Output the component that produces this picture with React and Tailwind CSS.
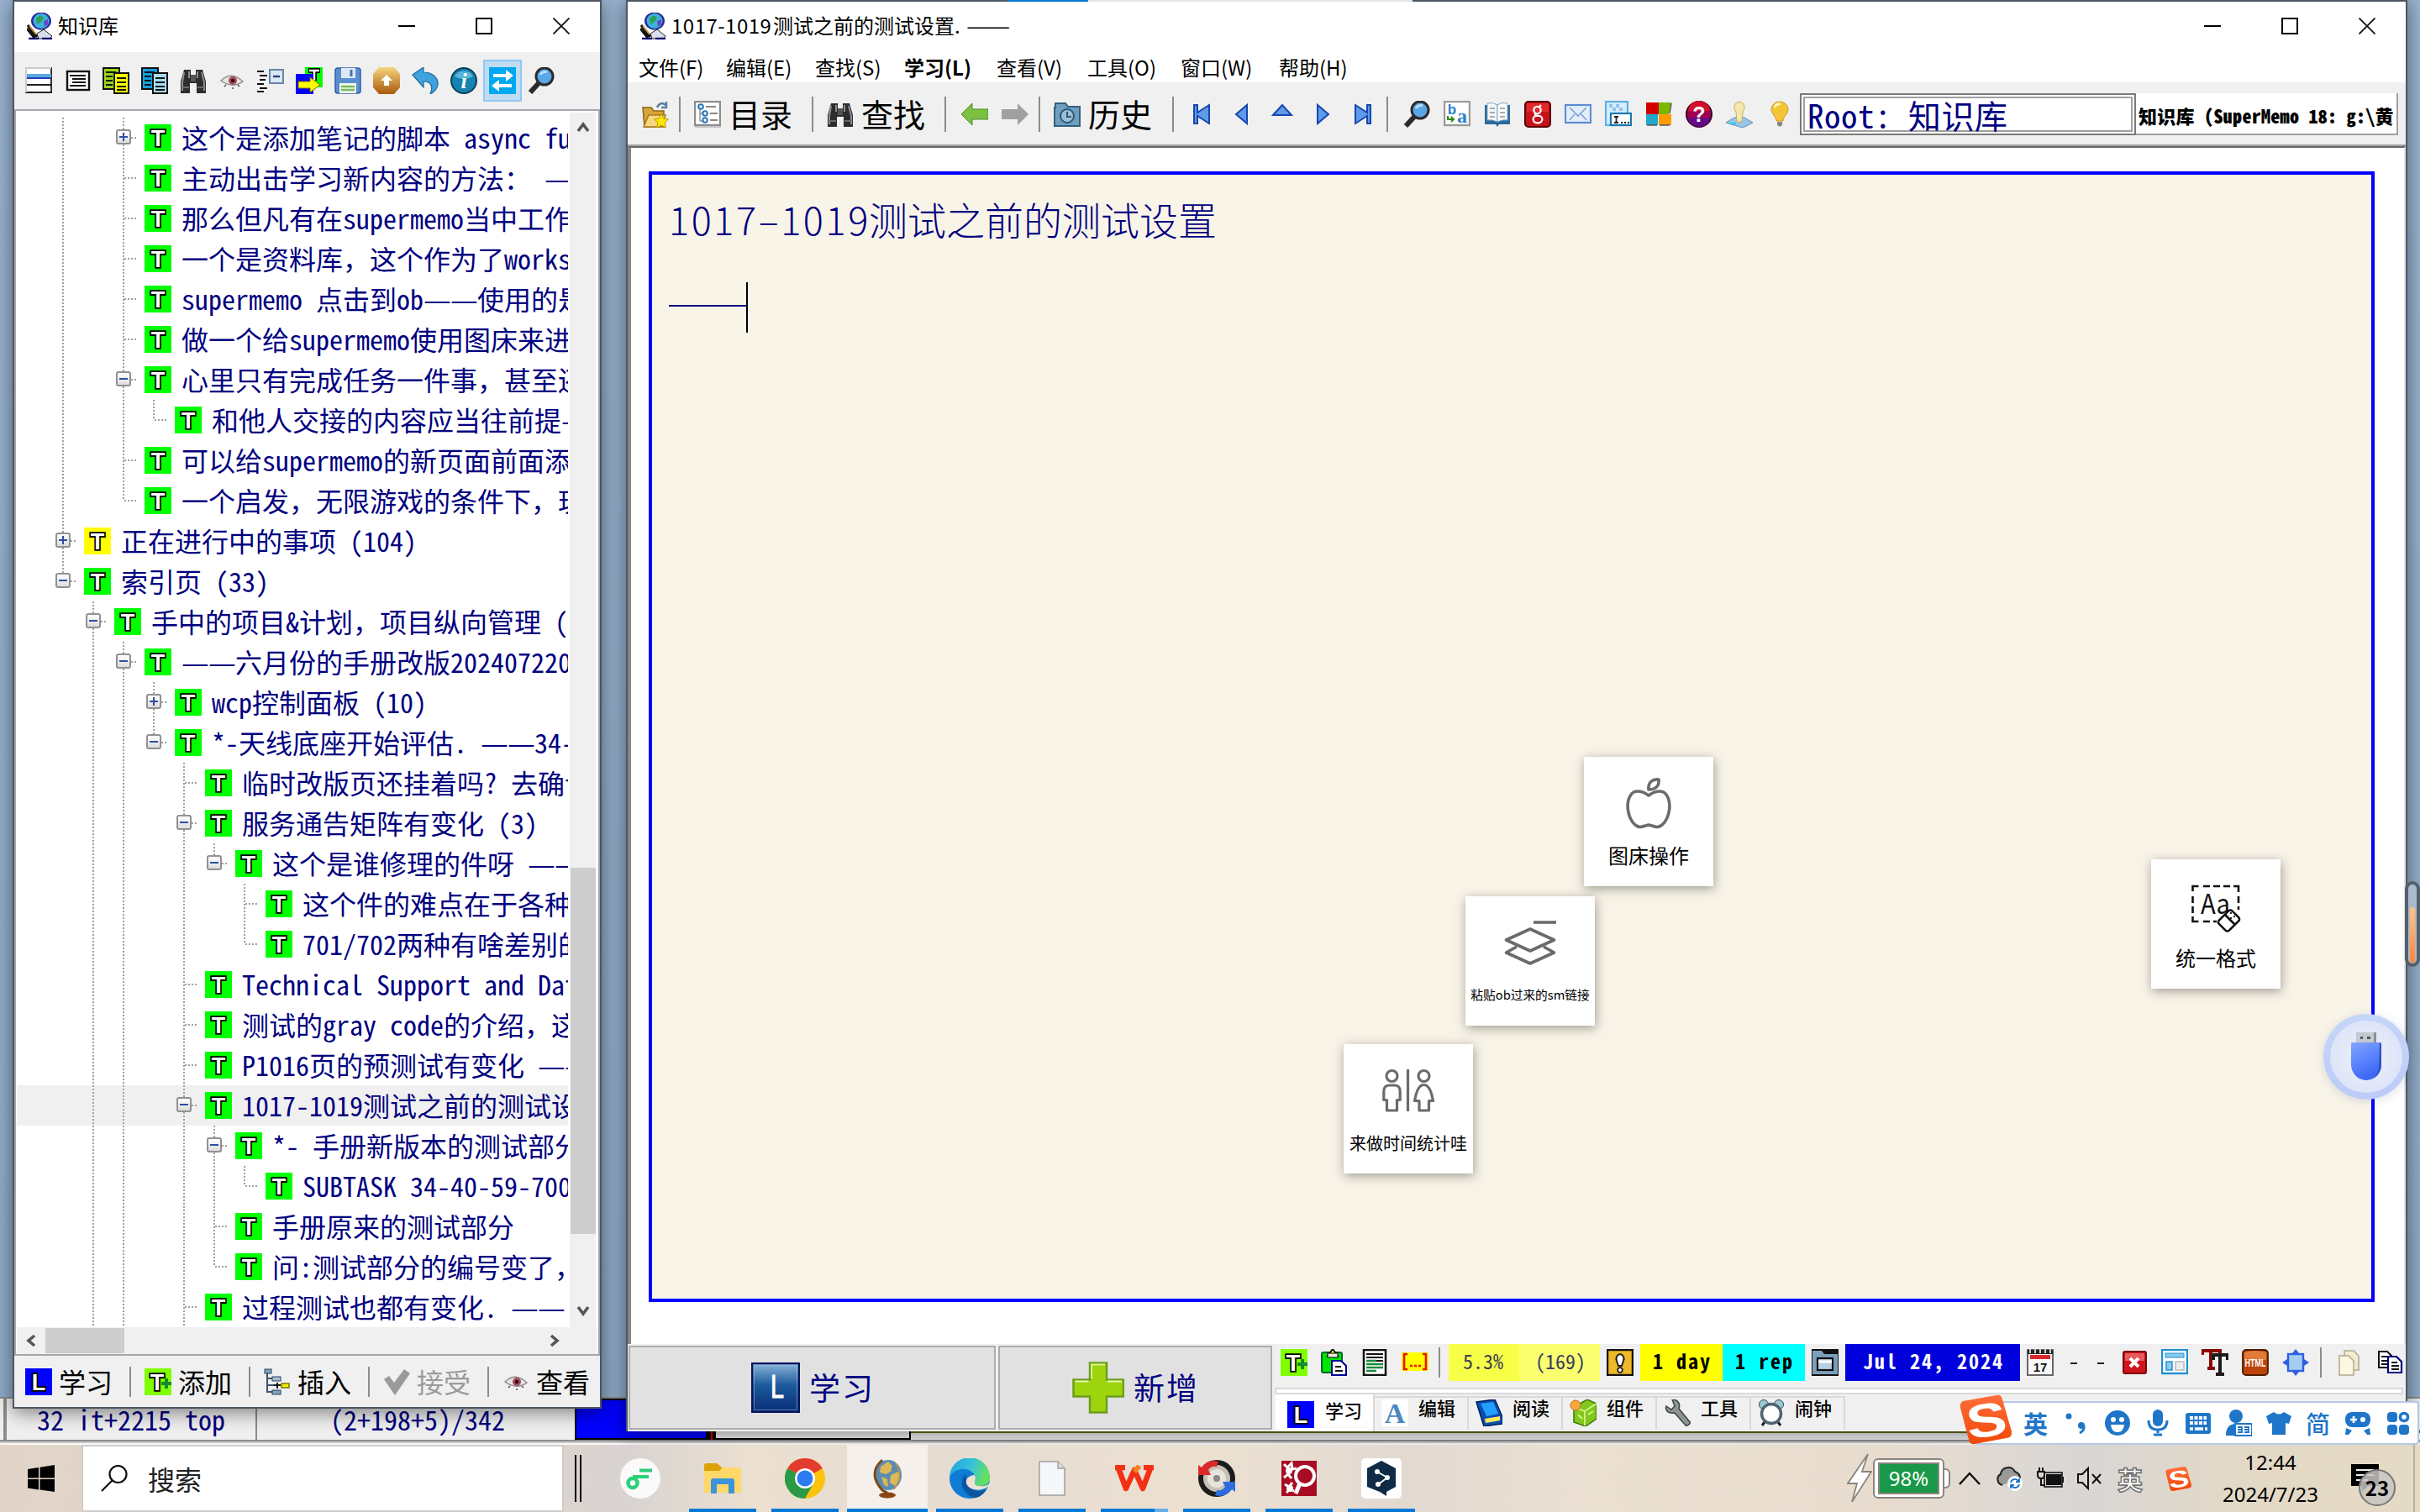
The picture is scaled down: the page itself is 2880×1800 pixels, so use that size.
import React from "react";

/* ---------- small building blocks ---------- */

const I = ({ children, className = "" }) => (
  <svg viewBox="0 0 32 32" className={"block w-8 h-8 shrink-0 " + className} fill="none">
    {children}
  </svg>
);

const Sep = ({ className = "" }) => <div className={"w-0.5 shrink-0 bg-[#8c8c8c] " + className} />;

const Glyph = ({ ch, x = 16, fill = "#fff" }) => (
  <text
    x={x}
    y="26"
    textAnchor="middle"
    fontFamily="Liberation Sans"
    fontWeight="700"
    fontSize="27"
    fill={fill}
    stroke="#000"
    strokeWidth="3.6"
    paintOrder="stroke"
  >
    {ch}
  </text>
);

/* Latin characters take half a cell, everything else (dashes included) a full one */
const Grid = ({ t }) =>
  t.split(/([\x20-\x7e]+|—)/).map((s, i) =>
    s === "—" ? (
      <span key={i} className="inline-block w-8 origin-left scale-x-[1.15]">
        {s}
      </span>
    ) : i % 2 ? (
      <span key={i} className="[font-feature-settings:'hwid'_1]">
        {s}
      </span>
    ) : (
      s
    )
  );

const TopicIcon = ({ color = "#00ff00" }) => (
  <I>
    <rect width="32" height="32" fill={color} />
    <Glyph ch="T" />
  </I>
);
const LearnIcon = () => (
  <I>
    <rect width="32" height="32" fill="#0000ff" />
    <Glyph ch="L" />
  </I>
);
const AddTopicIcon = () => (
  <I>
    <rect width="32" height="32" fill="#80ff00" />
    <Glyph ch="T" x={15} />
    <path d="M26 12v12M20 18h12" stroke="#158a2a" strokeWidth="4" />
  </I>
);
const Globe = () => (
  <I>
    <ellipse cx="17" cy="10" rx="12" ry="10.5" fill="#2a2a9c" />
    <ellipse cx="17" cy="10" rx="9.5" ry="9" fill="#3bb4d8" />
    <path d="M11 7l5-4 4 3-3 5-5 3z" fill="#2f9e58" />
    <path d="M20 10l5-2v6l-4 3z" fill="#6a46c8" />
    <path d="M1 15l11 14M0 19l9 11" stroke="#111" strokeWidth="3" />
    <path d="M3 16l8 10" stroke="#b8902a" strokeWidth="2" />
    <path d="M12 25l8-5 10 8-3 3H14z" fill="#d9deea" stroke="#222" strokeWidth="1" />
    <path d="M2 31h12M18 31h12" stroke="#000070" strokeWidth="2.5" />
  </I>
);
const Magnifier = () => (
  <I>
    <path d="M3 30l11-12" stroke="#2b2b2b" strokeWidth="6" />
    <circle cx="20" cy="11" r="10" fill="#5aa7e6" stroke="#2b2b2b" strokeWidth="3" />
    <path d="M15 9a6 6 0 0 1 8-3" stroke="#b9dcf8" strokeWidth="3" />
  </I>
);
const Binoculars = () => (
  <I>
    <path d="M5 3h8v6h6V3h8l4 14v14H20V19h-8v12H1V17z" fill="#2d2d2d" />
    <path d="M5 6l-2 12v10M26 6l3 12v10M11 5v8M21 5v8" stroke="#8d8d8d" strokeWidth="2" />
    <path d="M3 24h8M21 24h8" stroke="#6a6a6a" strokeWidth="2" />
    <rect x="13" y="9" width="6" height="8" fill="#555" />
  </I>
);
const Eye = ({ className = "" }) => (
  <I className={className}>
    <path d="M3 16q12-12 26 1q-12 9-26-1z" fill="#e9e4e4" stroke="#8b8b8b" strokeWidth="1.5" />
    <circle cx="17" cy="16" r="5" fill="#a84a5c" />
    <circle cx="17" cy="16" r="2.3" fill="#2a0a12" />
    <path d="M7 23l2-2M17 26v-2M25 23l-2-2" stroke="#555" strokeWidth="1.6" />
  </I>
);
const Pages = ({ a, b }) => (
  <I>
    <rect x="1" y="1" width="19" height="25" fill={a} stroke="#111" strokeWidth="2" />
    <path d="M4 6h12M4 11h8M4 16h8M4 21h8" stroke="#111" strokeWidth="2" />
    <rect x="14" y="7" width="17" height="24" fill={b} stroke="#111" strokeWidth="2" />
    <path d="M17 13h11M17 18h11M17 23h11M17 27h11" stroke="#111" strokeWidth="1.8" />
  </I>
);
const TreeIcon = () => (
  <I>
    <path d="M4 4v24h10M4 12h8M4 20h8" stroke="#38536b" strokeWidth="2" />
    <rect x="1" y="1" width="8" height="5" fill="#7fa0bd" stroke="#2c4257" />
    <rect x="10" y="10" width="10" height="5" fill="#a8c0d4" stroke="#2c4257" />
    <path d="M12 20h8M16 17v7" stroke="#111" strokeWidth="2" />
    <rect x="21" y="18" width="9" height="5" fill="#f0f000" stroke="#77770a" strokeWidth="1.5" />
    <rect x="10" y="26" width="10" height="5" fill="#7fa0bd" stroke="#2c4257" />
  </I>
);

/* ---------- collection tree ---------- */

const DOTS_V = "bg-[repeating-linear-gradient(to_bottom,#a0a0a0_0px,#a0a0a0_2px,transparent_2px,transparent_4px)]";
const DOTS_H = "bg-[repeating-linear-gradient(to_right,#a0a0a0_0px,#a0a0a0_2px,transparent_2px,transparent_4px)]";

/* g: one character per level above the node, "|" where a guide line passes; end: last child of its parent */
const ROWS = [
  { g: "| ", box: "+", t: "这个是添加笔记的脚本 async fu" },
  { g: "| ", t: "主动出击学习新内容的方法： —" },
  { g: "| ", t: "那么但凡有在supermemo当中工作" },
  { g: "| ", t: "一个是资料库，这个作为了works" },
  { g: "| ", t: "supermemo 点击到ob——使用的是" },
  { g: "| ", t: "做一个给supermemo使用图床来进" },
  { g: "| ", box: "-", t: "心里只有完成任务一件事，甚至还" },
  { g: "| |", end: true, t: "和他人交接的内容应当往前提—" },
  { g: "| ", t: "可以给supermemo的新页面前面添" },
  { g: "| ", end: true, t: "一个启发，无限游戏的条件下，玩" },
  { g: "", box: "+", color: "#ffff00", t: "正在进行中的事项 (104)" },
  { g: "", box: "-", end: true, t: "索引页 (33)" },
  { g: " ", box: "-", t: "手中的项目&计划，项目纵向管理 (" },
  { g: " |", box: "-", t: "——六月份的手册改版202407220" },
  { g: " ||", box: "+", t: "wcp控制面板 (10)" },
  { g: " ||", box: "-", end: true, t: "*-天线底座开始评估. ——34-" },
  { g: " || ", t: "临时改版页还挂着吗? 去确认" },
  { g: " || ", box: "-", t: "服务通告矩阵有变化 (3)" },
  { g: " || |", box: "-", end: true, t: "这个是谁修理的件呀 ——" },
  { g: " || | ", t: "这个件的难点在于各种" },
  { g: " || | ", end: true, t: "701/702两种有啥差别的" },
  { g: " || ", t: "Technical Support and Dat" },
  { g: " || ", t: "测试的gray code的介绍，这" },
  { g: " || ", t: "P1016页的预测试有变化 ——" },
  { g: " || ", box: "-", sel: true, t: "1017-1019测试之前的测试设" },
  { g: " || |", box: "-", t: "*- 手册新版本的测试部分" },
  { g: " || ||", end: true, t: "SUBTASK 34-40-59-700" },
  { g: " || |", t: "手册原来的测试部分" },
  { g: " || |", end: true, t: "问:测试部分的编号变了，" },
  { g: " || ", t: "过程测试也都有变化. ——" },
];

const Row = ({ g, box, end, sel, color, t }) => (
  <div className={"flex h-12 shrink-0 pl-[37px] " + (sel ? "bg-[#f0f0f0]" : "")}>
    {g.split("").map((c, i) => (
      <div key={i} className="flex w-9 shrink-0 justify-center">
        {c === "|" && <div className={"w-0.5 " + DOTS_V} />}
      </div>
    ))}
    <div className="relative w-9 shrink-0">
      <div className={"absolute left-[17px] top-0 w-0.5 " + DOTS_V + (end ? " h-6" : " h-12")} />
      <div className={"absolute left-[19px] top-[23px] h-0.5 w-4 " + DOTS_H} />
      {box && (
        <div className="absolute left-[9px] top-[14px] flex h-[18px] w-[18px] items-center justify-center rounded-[3px] border-2 border-[#919191] bg-gradient-to-b from-white to-[#dcdcdc]">
          <div className="h-0.5 w-2.5 bg-[#2b4ea0]" />
          {box === "+" && <div className="absolute h-2.5 w-0.5 bg-[#2b4ea0]" />}
        </div>
      )}
    </div>
    <div className="ml-[7px] mt-2">
      <TopicIcon color={color} />
    </div>
    <div className="ml-[12px] whitespace-pre text-[32px] leading-[46px] text-[#000080]">
      <Grid t={t} />
    </div>
  </div>
);

const WinButtons = ({ className = "" }) => (
  <div className={"flex items-center " + className}>
    <div className="flex w-[92px] justify-center">
      <div className="h-0.5 w-5 bg-black" />
    </div>
    <div className="flex w-[92px] justify-center">
      <div className="h-5 w-5 border-2 border-black" />
    </div>
    <div className="flex w-[92px] justify-center">
      <svg viewBox="0 0 20 20" className="h-5 w-5">
        <path d="M0.5 0.5l19 19M19.5 0.5l-19 19" stroke="#111" strokeWidth="1.8" />
      </svg>
    </div>
  </div>
);

const Chevron = ({ d, className = "" }) => (
  <svg viewBox="0 0 16 16" className={"h-4 w-4 shrink-0 " + className}>
    <path d={d} fill="none" stroke="#555" strokeWidth="3.6" />
  </svg>
);

const LeftTools = () => (
  <div className="flex h-[68px] items-center bg-[#f0f0f0] pl-[6px]">
    {[
      <I key="a">
        <rect x="0" y="0" width="32" height="31" fill="#fdfdfd" />
        <path d="M0 21h32M0 30h32M31 0v31" stroke="#222" strokeWidth="1.8" />
        <rect x="0" y="8" width="31" height="6" fill="#5aa9e0" />
        <path d="M0 13h31" stroke="#2040c0" strokeWidth="2" />
        <path d="M0 1h31M1 0v30" stroke="#ccc" strokeWidth="2" />
      </I>,
      <I key="b">
        <rect x="4" y="5" width="26" height="22" fill="#fff" stroke="#111" strokeWidth="2.4" />
        <path d="M7 10h19M10 14h16M10 18h16M7 22h19" stroke="#111" strokeWidth="2" />
      </I>,
      <Pages key="c" a="#9ad61a" b="#ffff00" />,
      <Pages key="d" a="#10a0e0" b="#a8dcf0" />,
      <Binoculars key="e" />,
      <Eye key="f" />,
      <I key="g">
        <path d="M0 5h8M3 10h9M3 15h7M0 20h8M3 25h9M0 29h8" stroke="#111" strokeWidth="2" />
        <rect x="15" y="3" width="16" height="16" fill="#dbe7f5" stroke="#6a86a8" strokeWidth="2" />
        <path d="M19 11h8" stroke="#23406a" strokeWidth="2.4" />
      </I>,
      <I key="h">
        <rect x="11" y="0" width="21" height="24" fill="#00ff00" />
        <path d="M15 4h14M22 4v12" stroke="#000" strokeWidth="6" />
        <path d="M16 4h12M22 4v12" stroke="#fff" strokeWidth="2.5" />
        <rect x="0" y="8" width="21" height="24" fill="#0000ff" />
        <path d="M3 17h14v-5l12 9-12 9v-5H3z" fill="#ffff00" stroke="#806000" />
      </I>,
      <I key="i">
        <rect x="1" y="1" width="30" height="30" rx="3" fill="#5b8ed0" stroke="#2f5da8" strokeWidth="1.5" />
        <rect x="8" y="1" width="17" height="12" fill="#dce8f6" />
        <path d="M20 3v8" stroke="#4a70a8" strokeWidth="3" />
        <rect x="6" y="19" width="20" height="12" fill="#f0f8ea" />
        <path d="M8 23h16M8 27h16" stroke="#7cb860" strokeWidth="2.4" />
      </I>,
      <I key="j">
        <defs>
          <linearGradient id="amber" x1="0" y1="0" x2="0" y2="1">
            <stop offset="0" stopColor="#f6d67c" />
            <stop offset="1" stopColor="#a8590c" />
          </linearGradient>
        </defs>
        <path d="M7 0h18l7 8v16l-7 8H7l-7-8V8z" fill="url(#amber)" />
        <path d="M16 9l7 7h-4v6h-6v-6H9z" fill="#fff" />
      </I>,
      <I key="k">
        <path d="M1 9L14 0v6c12 0 18 8 17 15-1 6-5 9-9 11 4-9 1-15-8-15v7z" fill="#3fa2dc" stroke="#1a6a9e" strokeWidth="1.2" />
      </I>,
      <I key="l">
        <ellipse cx="16" cy="16" rx="15" ry="15" fill="#1583b0" stroke="#0a3f58" strokeWidth="2" />
        <path d="M5 11a12 11 0 0 1 22 0q-11 6-22 0z" fill="#59b6d8" />
        <text x="16" y="25" textAnchor="middle" fontFamily="Liberation Serif" fontStyle="italic" fontWeight="700" fontSize="26" fill="#fff">i</text>
      </I>,
      <I key="m">
        <rect width="32" height="32" fill="#00a8f0" />
        <path d="M5 10h17M10 22h17" stroke="#fff" strokeWidth="4" />
        <path d="M20 3l9 7-9 7zM12 15l-9 7 9 7z" fill="#fff" />
      </I>,
      <Magnifier key="n" />,
    ].map((ic, i) => (
      <div
        key={i}
        className={
          "flex h-[50px] w-[46px] shrink-0 items-center justify-center " +
          (i === 12 ? "border-2 border-[#8fc8f6] bg-[#c0dcf3]" : "")
        }
      >
        {ic}
      </div>
    ))}
  </div>
);

const LeftWindow = () => (
  <div className="absolute left-[15px] top-0 flex h-[1677px] w-[701px] flex-col border-2 border-[#4c5763] bg-[#f0f0f0] shadow-[0_4px_22px_rgba(0,0,0,0.5)]">
    <div className="flex h-[60px] shrink-0 items-center bg-white pb-0.5 pl-[15px]">
      <Globe />
      <div className="ml-[5px] pb-0.5 text-2xl leading-none text-black">知识库</div>
      <WinButtons className="ml-auto" />
    </div>
    <LeftTools />
    <div className="flex h-[1484px] shrink-0 flex-col border-2 border-[#a8a5ae] bg-white">
      <div className="flex h-[1448px] shrink-0">
        <div className="ml-px flex h-[1448px] w-[656px] shrink-0 flex-col overflow-hidden pt-[8px]">
          {ROWS.map((r, i) => (
            <Row key={i} {...r} />
          ))}
        </div>
        <div className="ml-0.5 mt-0.5 flex w-[31px] flex-col items-center bg-[#f0f0f0] pt-[9px]">
          <Chevron d="M2 13L8 5l6 8" />
          <div className="mt-[874px] h-[436px] w-[30px] shrink-0 bg-[#cdcdcd]" />
          <Chevron d="M2 3l6 8 6-8" className="mt-[84px]" />
        </div>
      </div>
      <div className="ml-px mr-0.5 flex h-8 items-center bg-[#f0f0f0] pl-2">
        <Chevron d="M13 2L6 8l7 6" />
        <div className="ml-[10px] h-[30px] w-[94px] bg-[#cdcdcd]" />
        <Chevron d="M3 2l7 6-7 6" className="ml-auto mr-[41px]" />
      </div>
    </div>
    <div className="-ml-[3px] flex flex-1 items-center text-[32px] leading-none text-black">
      {[
        [<LearnIcon />, "学习"],
        [<AddTopicIcon />, "添加"],
        [<TreeIcon />, "插入"],
        [
          <I>
            <path d="M1 13l6-4 6 8L25 1l7 5-18 26z" fill="#9a9a9a" />
          </I>,
          "接受",
        ],
        [<Eye />, "查看"],
      ].map(([ic, t], i) => (
        <div key={i} className="flex w-[142px] shrink-0 items-center pl-4">
          {ic}
          <div className={"ml-[8px] pb-0.5 " + (i === 3 ? "text-[#9a9a9a]" : "")}>{t}</div>
          {i < 4 && <Sep className="ml-auto h-9" />}
        </div>
      ))}
    </div>
  </div>
);

/* ---------- main window ---------- */

const BlueTri = ({ d }) => (
  <I>
    <path d={d} fill="#5f9be8" stroke="#1646b0" strokeWidth="2" />
  </I>
);

const MENU = [
  ["文件(F)", "w-[104px]"],
  ["编辑(E)", "w-[106px]"],
  ["查找(S)", "w-[106px]"],
  ["学习(L)", "w-[110px] font-bold"],
  ["查看(V)", "w-[108px]"],
  ["工具(O)", "w-[111px]"],
  ["窗口(W)", "w-[117px]"],
  ["帮助(H)", "w-[100px]"],
];

const MainTools = () => (
  <div className="flex h-[74px] items-center bg-[#f0f0f0] pt-0.5">
    <div className="ml-[17px]">
      <I>
        <path d="M1 8h10l3 4h12v19H3z" fill="#d9a43a" stroke="#8a6414" strokeWidth="1.5" />
        <path d="M2 31l6-14h20l-4 14z" fill="#f8d77e" stroke="#a57a1c" strokeWidth="1.5" />
        <path d="M18 8q4-8 10-3M29 1v7h-6" stroke="#5b7f9e" strokeWidth="2.5" />
        <path d="M23 15l2.500 6 6 1-4.500 4 1.500 6-5.500-3-5.500 3 1.500-6-4.500-4 6-1z" fill="#ffe900" stroke="#b89600" />
      </I>
    </div>
    <Sep className="ml-3 h-[42px]" />
    <I className="ml-4">
      <rect x="1" y="1" width="30" height="28" fill="#fff" stroke="#8c8c8c" strokeWidth="2.4" />
      <path d="M1 31h31" stroke="#c4c4c4" strokeWidth="2" />
      <path d="M7 8v16h5M7 15h5" stroke="#777" strokeWidth="1.2" />
      <circle cx="8" cy="7" r="2.8" stroke="#2b78b8" strokeWidth="2" />
      <circle cx="13" cy="15" r="2.8" stroke="#2b78b8" strokeWidth="2" />
      <circle cx="13" cy="23" r="2.8" stroke="#2b78b8" strokeWidth="2" />
      <path d="M14 7h12M19 15h9M19 23h9" stroke="#888" strokeWidth="2" />
    </I>
    <div className="ml-[9px] w-[83px] pb-0.5 text-[38px] leading-none text-black">目录</div>
    <Sep className="ml-4 h-[42px]" />
    <div className="ml-4">
      <Binoculars />
    </div>
    <div className="ml-[9px] w-20 pb-0.5 text-[38px] leading-none text-black">查找</div>
    <Sep className="ml-[19px] h-[42px]" />
    <I className="ml-[18px]">
      <path d="M0 16L13 3v7h19v12H13v7z" fill="#7cc142" stroke="#4e8a1e" strokeWidth="1" />
    </I>
    <I className="ml-4">
      <path d="M32 16L19 3v7H0v12h19v7z" fill="#a0a0a0" />
    </I>
    <Sep className="ml-3 h-[42px]" />
    <I className="ml-4">
      <path d="M2 8V3h12l3 4h14v23H1V8z" fill="#6f9fbe" stroke="#33607f" strokeWidth="2" />
      <circle cx="16" cy="18" r="8" fill="#9cc0d6" stroke="#2c5878" strokeWidth="2" />
      <path d="M16 13v6h5" stroke="#2c5878" strokeWidth="2" />
    </I>
    <div className="ml-[9px] w-20 pb-0.5 text-[38px] leading-none text-black">历史</div>
    <Sep className="ml-5 h-[42px]" />
    <div className="ml-[9px] flex">
      {[
        "M7 5h4v9l14-9v22L11 18v9H7z",
        "M22 5v22L9 16z",
        "M5 17L16 5l11 12z",
        "M10 5v22l13-11z",
        "M25 5h-4v9L7 5v22l14-9v9h4z",
      ].map((d, i) => (
        <div key={i} className="flex w-12 justify-center">
          <BlueTri d={d} />
        </div>
      ))}
    </div>
    <Sep className="ml-1 h-[42px]" />
    <div className="ml-[10px] flex">
      {[
        <Magnifier />,
        <I>
          <rect x="1" y="1" width="30" height="28" fill="#fff" stroke="#9a9a9a" strokeWidth="2.4" />
          <text x="10" y="16" textAnchor="middle" fontFamily="Liberation Sans" fontWeight="700" fontSize="17" fill="#2a80c8">b</text>
          <text x="22" y="26" textAnchor="middle" fontFamily="Liberation Serif" fontWeight="700" fontSize="24" fill="#2a80c8">a</text>
          <path d="M5 18v4h6M9 19l3 3-3 3" stroke="#2f8a1c" strokeWidth="2" />
        </I>,
        <I>
          <path d="M1 5h30v23H18l-2 3-2-3H1z" fill="#2c6a9c" />
          <path d="M4 3q7-2 12 2v20q-6-3-12-2z" fill="#f4f8fb" stroke="#7ba4c4" />
          <path d="M28 3q-7-2-12 2v20q6-3 12-2z" fill="#fff" stroke="#7ba4c4" />
          <path d="M7 9h6M7 14h6M7 19h6M19 9h6M19 14h6M19 19h6" stroke="#aaa" strokeWidth="2" />
        </I>,
        <I>
          <rect x="1" y="1" width="30" height="30" rx="4" fill="#c4141a" stroke="#5c0004" strokeWidth="2" />
          <path d="M3 3h26v10H3z" fill="#e0292d" />
          <circle cx="15.500" cy="11" r="4.200" stroke="#fff" strokeWidth="2.200" />
          <path d="M20 5l-3 3M12 16q2 2 5 2" stroke="#fff" strokeWidth="2" />
          <ellipse cx="16" cy="22" rx="5.400" ry="4.400" stroke="#fff" strokeWidth="2.200" />
        </I>,
        <I>
          <rect x="1" y="5" width="30" height="21" fill="#e3eefb" stroke="#5b8fd0" strokeWidth="2.200" />
          <path d="M6 8l10 10L26 8M6 23l6-7M26 23l-6-7" stroke="#7aa2d8" strokeWidth="1.600" />
        </I>,
        <I>
          <rect x="1" y="1" width="26" height="28" fill="#d8ecfb" stroke="#58b0e8" strokeWidth="2.200" />
          <path d="M5 4h4v4H5zM13 4h4v4h-4zM9 8h4v4H9zM17 8h4v4h-4z" fill="#8cc6f0" />
          <rect x="7" y="15" width="24" height="14" fill="#fff" stroke="#1a78b0" strokeWidth="2.200" />
          <path d="M11 19h5M13.500 19v7M11 26h5M19 26h2M23 26h2M27 26h2" stroke="#222" strokeWidth="1.800" />
        </I>,
        <I>
          <path d="M1 2h15v14H1z" fill="#d40000" />
          <path d="M16 2h15l-3 14H16z" fill="#7ab800" />
          <path d="M1 16h14v13H1z" fill="#1fa8cc" />
          <path d="M16 16h15v13H16z" fill="#ff9a00" />
          <path d="M31 3l-2 12M2 29h12M17 29h12" stroke="#555" strokeWidth="1.500" />
        </I>,
        <I>
          <ellipse cx="16" cy="16" rx="15" ry="15" fill="#a00050" stroke="#3a0024" strokeWidth="2" />
          <path d="M3 12a13 12 0 0 1 26 0z" fill="#d0102c" />
          <path d="M3 20a13 11 0 0 0 26 0z" fill="#640a86" />
          <text x="16" y="25" textAnchor="middle" fontFamily="Liberation Sans" fontWeight="700" fontSize="25" fill="#fff">?</text>
        </I>,
        <I>
          <path d="M0 26l10-6h12l10 6-12 6z" fill="#9cc4e6" stroke="#5a90c0" />
          <path d="M16 1a7 7 0 0 1 4 12l-1 12h-6l-1-12a7 7 0 0 1 4-12z" fill="#f4e6ae" stroke="#c8ae60" />
          <path d="M4 27h8" stroke="#20d0f0" strokeWidth="2" />
        </I>,
        <I>
          <path d="M16 1a10 9 0 0 1 10 9c0 6-5 7-6 14h-8c-1-7-6-8-6-14a10 9 0 0 1 10-9z" fill="#f3c536" stroke="#d49a20" />
          <path d="M10 8q2-5 7-4" stroke="#fff3b4" strokeWidth="3" />
          <path d="M13 25h6v4l-3 2-3-2z" fill="#888" />
        </I>,
      ].map((ic, i) => (
        <div key={i} className="flex w-12 justify-center">
          {ic}
        </div>
      ))}
    </div>
    <div className="h-[50px] w-[400px] border-2 border-[#7a7a7a] bg-white p-0.5">
      <div className="h-[42px] w-[392px] whitespace-pre border-2 border-[#a0a0a0] pl-[3px] text-[39px] leading-[38px] tracking-[0.500px] text-[#000080] [font-feature-settings:'hwid'_1]">
        Root: 知识库
      </div>
    </div>
    <div className="flex h-[50px] w-[312px] items-center overflow-hidden whitespace-pre border-b-2 border-r-2 border-[#a0a0a0] bg-white pl-[3px] pt-[3px] text-[22px] font-black leading-none tracking-[0.300px] text-black [font-feature-settings:'hwid'_1]">
      知识库 (SuperMemo 18: g:\黄
    </div>
  </div>
);

const TAB_ICONS = [
  <LearnIcon />,
  <I>
    <rect width="32" height="32" fill="#fff" />
    <text x="16" y="28" textAnchor="middle" fontFamily="Liberation Serif" fontWeight="700" fontSize="34" fill="#4a88c0">A</text>
  </I>,
  <I>
    <path d="M1 3L23 0l9 21v8L10 32z" fill="#0a4fae" stroke="#001c60" strokeWidth="1.500" />
    <path d="M6 5l15-2 6 14-14 3z" fill="#22a0ff" />
    <path d="M11 23l18-3v5l-17 3z" fill="#ffe85a" />
  </I>,
  <I>
    <path d="M5 9l16-9 11 5v18l-13 9L5 27z" fill="#82c81c" stroke="#3c7808" strokeWidth="1.500" />
    <path d="M5 9l13 5 14-9M18 14v17M10 18l5 5M22 18l6-4" stroke="#d4f48c" strokeWidth="1.800" />
    <circle cx="7" cy="7" r="6" fill="#f8a83c" stroke="#c07010" />
  </I>,
  <I>
    <path d="M3 8l6 4 4-4L10 0c7 0 10 5 8 11l14 17-5 4L13 16C6 17 1 14 3 8z" fill="#8c9494" stroke="#3c4444" strokeWidth="1.500" />
  </I>,
  <I>
    <circle cx="7" cy="6" r="5.500" fill="#9cc8d4" stroke="#304850" />
    <circle cx="25" cy="6" r="5.500" fill="#9cc8d4" stroke="#304850" />
    <path d="M8 27l-3 4M24 27l3 4" stroke="#222" strokeWidth="3" />
    <circle cx="16" cy="17" r="11.500" fill="#fff" stroke="#506470" strokeWidth="3.500" />
  </I>,
];

const BottomRight = () => (
  <div className="flex w-[1347px] flex-col">
    <div className="flex h-11 items-center whitespace-pre leading-none [font-feature-settings:'hwid'_1]">
      <div className="ml-2 flex gap-4">
        <AddTopicIcon />
        <I>
          <rect x="1" y="4" width="24" height="24" rx="2" fill="#00e600" stroke="#063" strokeWidth="2" />
          <path d="M8 8l6-8 6 8z" fill="#ffff00" stroke="#000" strokeWidth="1.800" />
          <rect x="8" y="5" width="12" height="5" fill="#e8e8e8" stroke="#000" />
          <path d="M13 14h11l6 6v11H13z" fill="#fff" stroke="#000090" strokeWidth="2" />
          <path d="M17 21h7M17 26h9" stroke="#111" strokeWidth="2" />
        </I>
        <I>
          <rect x="3" y="1" width="26" height="30" fill="#fff" stroke="#111" strokeWidth="2.500" />
          <path d="M6 6h20M6 10h20M6 14h20" stroke="#111" strokeWidth="2.200" />
          <path d="M6 14h12M6 18h20M6 22h20M6 26h12" stroke="#188a3c" strokeWidth="2.400" />
        </I>
        <I>
          <rect y="4" width="32" height="22" fill="#ffff00" />
          <path d="M7 6H3v18h4M25 6h4v18h-4M10 20h3M15 20h3M20 20h3" stroke="#ee1010" strokeWidth="2.600" />
        </I>
      </div>
      <Sep className="ml-3 h-9" />
      <div className="ml-[10px] flex h-11 w-[84px] items-center bg-[#f8ff48] pb-1 pl-[17px] text-2xl leading-none text-[#3c3c50]">5.3%</div>
      <div className="flex h-11 w-24 items-center bg-[#faff70] pb-1 pl-[19px] text-2xl leading-none text-[#3c3c60]">(169)</div>
      <I className="ml-2">
        <rect x="1" y="1" width="30" height="30" fill="#f0b828" stroke="#111" strokeWidth="2.500" />
        <path d="M16 6a5 5.500 0 0 1 4 8l-2 6h-4l-2-6a5 5.500 0 0 1 4-8z" fill="#fff" stroke="#222" strokeWidth="2" />
        <circle cx="16" cy="25" r="2.800" fill="#fff" stroke="#222" strokeWidth="1.800" />
      </I>
      <div className="ml-2 flex h-11 w-[98px] items-center bg-[#ffff00] pb-1 pl-[15px] text-2xl font-bold leading-none tracking-[2px] text-black">1 day</div>
      <div className="flex h-11 w-[98px] items-center bg-[#00ffff] pb-1 pl-[15px] text-2xl font-bold leading-none tracking-[2px] text-black">1 rep</div>
      <I className="ml-2">
        <path d="M0 0h32v32H0z" fill="#111" />
        <path d="M1 2h11l3 4h16v24H1z" fill="#7ba0bc" />
        <rect x="7" y="11" width="18" height="14" fill="#b8d0e0" stroke="#111" strokeWidth="2.200" />
        <path d="M8 15h16" stroke="#fff" strokeWidth="3" />
      </I>
      <div className="ml-2 flex h-11 w-[208px] items-center bg-[#0000dc] pb-1 pl-[21px] text-2xl font-bold leading-none tracking-[2px] text-white">Jul 24, 2024</div>
      <I className="ml-2">
        <rect x="1" y="1" width="30" height="30" fill="#f8f8f8" stroke="#666" strokeWidth="2" />
        <path d="M1 1h30v5H1z" fill="#222" />
        <path d="M4 0v5M10 0v5M16 0v5M22 0v5M28 0v5" stroke="#ccc" strokeWidth="2" />
        <path d="M4 7h24v5H4z" fill="#d8282c" />
        <text x="16" y="27" textAnchor="middle" fontFamily="Liberation Sans" fontWeight="700" fontSize="15" fill="#111">17</text>
      </I>
      <div className="ml-5 mt-0.5 h-0.5 w-2 bg-[#222]" />
      <div className="ml-6 mt-0.5 h-0.5 w-2 bg-[#222]" />
      <div className="ml-5 flex gap-4">
        <I>
          <rect x="3" y="3" width="27" height="26" rx="2" fill="#d0141c" stroke="#7c080c" strokeWidth="2" />
          <path d="M5 5h23v9H5z" fill="#e8585c" />
          <path d="M11 11l10 10M21 11L11 21" stroke="#fff" strokeWidth="4" />
        </I>
        <I>
          <rect x="1" y="1" width="30" height="28" fill="#fff" stroke="#2090d0" strokeWidth="2.400" />
          <rect x="5" y="5" width="22" height="5" fill="#88ccf0" stroke="#2090d0" />
          <rect x="6" y="15" width="7" height="10" fill="#88ccf0" stroke="#2090d0" strokeWidth="1.500" />
          <rect x="17" y="15" width="10" height="10" fill="#eee" stroke="#bbb" strokeWidth="1.500" />
        </I>
        <I>
          <path d="M0 2h22v6M1 2v5M11 2v21M7 23h9" stroke="#8c0808" strokeWidth="4" />
          <path d="M13 7h18v6M14 7v6M22 7v23M17 30h10" stroke="#1c1c1c" strokeWidth="4" />
        </I>
        <I>
          <rect x="1" y="1" width="30" height="30" rx="4" fill="#bc4408" stroke="#4c1c04" strokeWidth="1.800" />
          <path d="M3 4q13-4 26 0v9H3z" fill="#e07c38" />
          <text x="16" y="21" textAnchor="middle" fontFamily="Liberation Sans" fontWeight="700" fontSize="13" textLength="25" lengthAdjust="spacingAndGlyphs" fill="#fff">HTML</text>
        </I>
        <I>
          <rect x="7" y="6" width="18" height="20" fill="#a4ccf0" stroke="#3060e0" strokeWidth="2.400" />
          <path d="M16 0l4 5h-8zM16 32l4-5h-8zM0 16l6-4v8zM32 16l-6-4v8z" fill="#3060e0" />
        </I>
      </div>
      <Sep className="ml-[13px] h-9" />
      <div className="ml-[17px] flex gap-[17px]">
        <I>
          <path d="M10 2h11l6 6v17H10z" fill="#f4ead0" stroke="#b0a890" strokeWidth="1.500" />
          <path d="M4 8h11l6 6v17H4z" fill="#fdf6e0" stroke="#b0a890" strokeWidth="1.500" />
        </I>
        <I>
          <path d="M2 3h10l5 5v14H2z" fill="#fff" stroke="#111" strokeWidth="2" />
          <path d="M5 9h7M5 14h9M5 18h9" stroke="#111" strokeWidth="1.800" />
          <path d="M13 9h10l6 6v13H13z" fill="#fff" stroke="#000080" strokeWidth="2.200" />
          <path d="M17 16h7M17 20h9M17 24h9" stroke="#111" strokeWidth="1.800" />
        </I>
      </div>
    </div>
    <div className="ml-px mr-[3px] mt-2 h-2 shrink-0 border-2 border-[#d9d9d9] bg-white" />
    <div className="flex h-11 text-[22px] font-medium leading-none text-black">
      {["学习", "编辑", "阅读", "组件", "工具", "闹钟"].map((t, i) => (
        <div
          key={t}
          className={
            i === 0
              ? "ml-0.5 flex h-11 w-[118px] items-center border-r-2 border-[#d9d9d9] bg-white pl-[14px] pt-1"
              : "mt-0.5 flex h-[40px] w-28 items-center border-r-2 border-t-2 border-[#d9d9d9] pb-0.5 pl-2"
          }
        >
          {TAB_ICONS[i]}
          <div className={i === 0 ? "-mt-1 ml-[13px] pb-2" : "ml-3 pb-3.5"}>{t}</div>
        </div>
      ))}
    </div>
  </div>
);

const Card = ({ className, children, label, labelClass }) => (
  <div className={"absolute flex h-[154px] w-[154px] flex-col items-center bg-white shadow-[1px_3px_12px_rgba(70,70,60,0.5)] " + className}>
    {children}
    <div className={"whitespace-nowrap leading-none text-black " + labelClass}>{label}</div>
  </div>
);

const MainWindow = () => (
  <div className="absolute left-[745px] top-0 flex h-[1704px] w-[2120px] flex-col border-x-2 border-t-2 border-[#4c5763] bg-white shadow-[0_2px_22px_rgba(0,0,0,0.5)]">
    <div className="absolute -top-0.5 left-[452px] h-0.5 w-24 bg-[#0078d7]" />
    <div className="absolute -top-0.5 left-[548px] h-0.5 w-[386px] bg-[#e5e5e5]" />
    <div className="flex h-[60px] shrink-0 items-center pb-0.5 pl-[15px]">
      <Globe />
      <div className="ml-[5px] flex items-center whitespace-pre pb-0.5 text-2xl leading-none text-black">
        <span className="w-[121px] tracking-[0.500px]">1017-1019</span>
        <span>测试之前的测试设置. </span>
        <span className="ml-0.5 origin-left scale-x-[1.300]">——</span>
      </div>
      <WinButtons className="ml-auto mr-0" />
    </div>
    <div className="flex h-9 shrink-0 items-center pl-[13px] text-2xl leading-none text-black">
      {MENU.map(([t, c]) => (
        <div key={t} className={"shrink-0 whitespace-nowrap " + c}>
          {t}
        </div>
      ))}
    </div>
    <MainTools />
    <div className="h-0.5 shrink-0 bg-[#a0a0a0]" />
    <div className="flex h-[1426px] shrink-0 border-l-4 border-r-2 border-t-2 border-l-[#858585] border-r-[#e3e3e3] border-t-[#696969] bg-white pl-[21px] pt-7">
      <div className="flex h-[1346px] w-[2054px] flex-col border-4 border-[#0000ff] bg-[#f9f4e8] pl-[20px] pt-[24px] text-[#000080]">
        <div className="flex h-14 items-center text-[46px] font-light leading-none">
          <span className="w-[238px] whitespace-nowrap text-[45px] tracking-[2.600px]">1017–1019</span>
          <span>测试之前的测试设置</span>
        </div>
        <div className="mt-12 flex h-[60px] items-center">
          <div className="mb-1 h-0.5 w-[92px] bg-[#000080]" />
          <div className="h-[60px] w-0.5 bg-black" />
        </div>
      </div>
    </div>
    <div className="flex h-[104px] shrink-0 bg-[#f0f0f0]">
      <div className="ml-px mt-0.5 flex h-[100px] w-[437px] items-center border-2 border-[#adadad] bg-[#e1e1e1] pl-[144px] text-[37px] leading-none text-[#000080]">
        <svg viewBox="0 0 58 60" className="h-[60px] w-[58px]">
          <defs>
            <linearGradient id="lbtn" x1="0" y1="0" x2="0" y2="1">
              <stop offset="0" stopColor="#8ab4d8" />
              <stop offset="0.450" stopColor="#1c5a9c" />
              <stop offset="1" stopColor="#0a2c78" />
            </linearGradient>
          </defs>
          <rect x="1" y="1" width="56" height="58" fill="url(#lbtn)" stroke="#06145c" strokeWidth="2.500" />
          <rect x="3.500" y="3.500" width="51" height="53" fill="none" stroke="#9cc4e4" strokeOpacity="0.500" />
          <text x="31" y="42" textAnchor="middle" fontFamily="Liberation Sans" fontSize="38" fill="#fff" stroke="#fff" strokeWidth="1" textLength="16" lengthAdjust="spacingAndGlyphs">L</text>
        </svg>
        <div className="ml-[11px] pb-0.5 tracking-[2px]">学习</div>
      </div>
      <div className="ml-[3px] mt-0.5 flex h-[100px] w-[326px] items-center border-2 border-[#adadad] bg-[#e1e1e1] pl-[86px] text-[37px] leading-none text-[#000080]">
        <svg viewBox="0 0 62 62" className="h-[62px] w-[62px]">
          <path d="M21 1.500h20v20h20v20H41v19H21v-19H1.500v-20H21z" fill="#9ed40e" stroke="#6c9e1c" strokeWidth="2.500" />
          <path d="M23 20V3.500h16" fill="none" stroke="#dcf48c" strokeWidth="2" />
          <path d="M3.500 23.500h16M42 23.500h17" stroke="#e8fcb4" strokeWidth="2" />
        </svg>
        <div className="ml-[11px] pb-0.5 tracking-[2px]">新增</div>
      </div>
      <div className="w-0.5" />
      <BottomRight />
    </div>
  </div>
);

const Cards = () => (
  <>
    <Card className="left-[1885px] top-[901px]" label="图床操作" labelClass="mt-[19px] text-2xl">
      <svg viewBox="0 0 54 62" className="mt-[24px] h-[62px] w-[54px]" fill="none" stroke="#6b6b6b" strokeWidth="3.600" strokeLinejoin="round">
        <path d="M27 22C19 16 10 15 6 21C-1 31 2 49 11 57C17 62 21 58 27 57C33 58 37 62 43 57C52 49 55 31 48 21C44 15 35 16 27 22z" />
        <path d="M27 15C26 6 32 2 39 3C40 11 35 15 27 15z" />
      </svg>
    </Card>
    <Card className="left-[1744px] top-[1067px]" label="粘贴ob过来的sm链接" labelClass="mt-[28px] text-[14.700px]">
      <svg viewBox="0 0 62 54" className="mt-[28px] h-[54px] w-[62px]" fill="none" stroke="#6b6b6b" strokeWidth="3.600" strokeLinejoin="round">
        <path d="M35 3h27" />
        <path d="M31 11L59.500 24 31 37 2.500 24z" />
        <path d="M15 32L2.500 39 31 52 59.500 39 47 32" />
      </svg>
    </Card>
    <Card className="left-[1599px] top-[1243px]" label="来做时间统计哇" labelClass="mt-[27px] text-[20px]">
      <svg viewBox="0 0 62 52" className="mt-[29px] h-[52px] w-[62px]" fill="none" stroke="#6b6b6b" strokeWidth="3.200" strokeLinejoin="round">
        <circle cx="11.500" cy="9" r="6.500" />
        <circle cx="49.500" cy="9" r="6.500" />
        <path d="M30.500 1v50" />
        <path d="M5.500 37.500H1.800V27q0-7 7-7h5.400q7 0 7 7v10.500H17.500V50H5.500z" />
        <path d="M44 38.500H38.500Q41 24 46 20.500q3.500-2 7 0Q58 24 60.500 38.500H55.500V50H44z" />
      </svg>
    </Card>
    <Card className="left-[2560px] top-[1023px]" label="统一格式" labelClass="mt-[18px] text-2xl">
      <svg viewBox="0 0 60 58" className="mt-[29px] h-[58px] w-[60px]" fill="none" stroke="#111" strokeWidth="2.600">
        <path d="M2.500 9V3h7M15 3h8M27 3h8M39 3h8M51 3h6v7M57 15v8M57 27v4M2.500 15v8M2.500 27v8M2.500 39v6h7M15 45h8M27 45h4" />
        <text x="12" y="36" fontFamily="Noto Sans CJK SC" fontSize="33" fill="#111" stroke="none" textLength="35" lengthAdjust="spacingAndGlyphs">Aa</text>
        <rect x="37" y="33" width="17" height="22" rx="3" transform="rotate(45 45.500 44)" fill="#fff" />
        <path d="M41 37l12 12" />
        <path d="M48 34v2M52 38v2M48 40v2M53 35v2" strokeWidth="1.800" />
      </svg>
    </Card>
  </>
);

/* ---------- window behind, taskbar, input method bar ---------- */

const BackWindow = () => (
  <div className="absolute left-0 top-[1663px] flex h-[57px] w-[2880px] flex-col border-t-2 border-[#8c8c8c] bg-[#f0f0f0]">
    <div className="flex h-[49px] whitespace-pre pl-1 text-[32px] leading-none text-[#000080] [font-feature-settings:'hwid'_1]">
      <div className="h-[49px] w-[302px] border-l-4 border-r-2 border-[#8c8c8c] pl-[36px] pt-[8px]">32 it+2215 top</div>
      <div className="h-[49px] w-[378px] pl-[87px] pt-[8px]">(2+198+5)/342</div>
      <div className="h-[49px] w-[158px] border-2 border-black bg-[#0000ff]" />
      <div className="h-[49px] w-[10px] border-x-4 border-black bg-[#e00000]" />
      <div className="h-[49px] w-[232px] border-b-2 border-r-2 border-black bg-[#f0f0f0]" />
      <div className="mt-[37px] h-[4px] flex-1 bg-[#6b6b1a]" />
    </div>
    <div className="h-0.5 bg-[#8c8c8c]" />
    <div className="h-0.5 bg-[#c8c8c8]" />
    <div className="h-0.5 bg-[#f8f8f8]" />
  </div>
);

const TaskCell = ({ children, className = "w-[98px]", line = "w-20 bg-[#0078d7]" }) => (
  <div className={"flex h-20 shrink-0 flex-col items-center " + className}>
    <div className="flex flex-1 items-center justify-center">{children}</div>
    <div className={"h-1 " + line} />
  </div>
);

const Sogou = ({ className }) => (
  <svg viewBox="0 0 64 60" className={className}>
    <defs>
      <linearGradient id="sg" x1="0" y1="0" x2="0" y2="1">
        <stop offset="0" stopColor="#ff6d3a" />
        <stop offset="1" stopColor="#f04808" />
      </linearGradient>
    </defs>
    <path d="M4 8L44 1q6-1 7 5l11 38q1 7-6 8L18 59q-6 1-7-5L1 16q-1-6 3-8z" fill="url(#sg)" />
    <text x="32" y="50" textAnchor="middle" fontFamily="Liberation Sans" fontWeight="700" fontSize="56" fill="#fff" transform="rotate(-8 32 30)" textLength="48" lengthAdjust="spacingAndGlyphs">S</text>
  </svg>
);

const Taskbar = () => (
  <div className="absolute left-0 top-[1720px] flex h-20 w-[2880px] bg-[linear-gradient(90deg,#e2d5c8_0%,#dcd3cc_22%,#d9d4d2_26%,#ebdfd0_31%,#e6dcd2_38%,#ece0d1_50%,#e2d9d1_58%,#eadfd1_65%,#e8dccf_78%,#d9d6d4_86%,#e3d9c6_93%,#e5dac4_100%)]">
    <div className="flex w-[97px] items-center justify-center">
      <svg viewBox="0 0 32 32" className="h-8 w-8">
        <path d="M0 5l13-2v12.500H0zM14.500 2.700L32 0v15.500H14.500zM0 17h13v12.500L0 27.500zM14.500 17H32v15l-17.500-2.500z" fill="#000" />
      </svg>
    </div>
    <div className="flex h-20 w-[574px] items-center border-2 border-[#cfcbc8] bg-white pl-[21px]">
      <svg viewBox="0 0 32 32" className="h-8 w-8" fill="none" stroke="#111" strokeWidth="2.200">
        <circle cx="20.500" cy="11" r="10" />
        <path d="M13.500 18.500L1 31" />
      </svg>
      <div className="ml-6 text-[32px] leading-none text-[#222]">搜索</div>
    </div>
    <div className="ml-[13px] mt-3 h-14 w-0.5 bg-black" />
    <div className="ml-1 mt-3 h-14 w-0.5 bg-black" />
    <div className="ml-[21px] flex">
      <TaskCell line="w-0">
        <svg viewBox="0 0 48 48" className="mt-1 h-12 w-12" fill="none">
          <circle cx="24" cy="24" r="24" fill="#fafafa" />
          <path d="M23 14.500h15M21 22h13" stroke="#2bd078" strokeWidth="4" />
          <circle cx="15" cy="29.500" r="5.500" stroke="#2bd078" strokeWidth="4.500" />
          <path d="M15 22h9" stroke="#2bd078" strokeWidth="4" />
        </svg>
      </TaskCell>
      <TaskCell>
        <svg viewBox="0 0 44 36" className="mt-1 h-9 w-11">
          <path d="M0 3q0-3 3-3h12l5 4v6H0z" fill="#e0a008" />
          <rect x="0" y="5" width="44" height="30" rx="2" fill="#ffd868" />
          <path d="M0 9h18l4-4H0z" fill="#e0a008" />
          <path d="M8 36V21q0-3 3-3h22q3 0 3 3v15h-7V25H15v11z" fill="#3c94dc" />
        </svg>
      </TaskCell>
      <TaskCell>
        <svg viewBox="0 0 48 48" className="mt-1 h-12 w-12">
          <circle cx="24" cy="24" r="24" fill="#fcc30c" />
          <path d="M24 24L3.200 12A24 24 0 0 1 44.800 12z" fill="#e33b2e" />
          <path d="M24 24L3.200 12A24 24 0 0 0 24 48L34 30z" fill="#2a9a47" />
          <circle cx="24" cy="24" r="12" fill="#fff" />
          <circle cx="24" cy="24" r="9.500" fill="#2c7cf0" />
        </svg>
      </TaskCell>
      <TaskCell className="mx-px w-24 bg-[#f5f0eb]" line="w-24 bg-[#0078d7]">
        <svg viewBox="0 0 40 48" className="mt-1 h-12 w-10">
          <ellipse cx="21" cy="20" rx="16" ry="18" fill="#5c8cae" />
          <path d="M12 10l9-6 5 5-2 7-6 3-7-2zM24 20l9-4 2 8-6 9-6-4zM13 22l7 3 1 9-5-2z" fill="#dcb858" />
          <path d="M30 6q10 15-2 31" stroke="#c09848" strokeWidth="1.500" fill="none" />
          <path d="M14 2Q-4 18 14 38l6 3" stroke="#7c4818" strokeWidth="3" fill="none" />
          <ellipse cx="20" cy="44" rx="10" ry="3.500" fill="#8c4418" />
        </svg>
      </TaskCell>
      <TaskCell>
        <svg viewBox="0 0 48 48" className="mt-1 h-12 w-12">
          <defs>
            <linearGradient id="edg" x1="0" y1="0" x2="1" y2="0.300">
              <stop offset="0" stopColor="#1ea0e0" />
              <stop offset="0.600" stopColor="#38c4d8" />
              <stop offset="1" stopColor="#64e060" />
            </linearGradient>
          </defs>
          <circle cx="24" cy="24" r="24" fill="#0e7cd4" />
          <path d="M0 24A24 24 0 0 1 48 22C49 30 43 33 36 33C28 33 30 28 31 24C30 16 22 12 14 13C6 14 1 19 0 24z" fill="url(#edg)" />
          <path d="M20 18c-8 6-8 22 8 29c6 1 13-4 16-10c-8 4-22 2-24-10q-1-5 0-9z" fill="#0c56a0" />
          <path d="M30 20c-6 0-13 5-9 12c6 8 18 6 23 3q5-2 4-8l1-1c0 6-8 8-13 7c-8 0-6-5-5-9z" fill="#eee2d4" />
        </svg>
      </TaskCell>
      <TaskCell>
        <svg viewBox="0 0 32 42" className="mt-1 h-[42px] w-8">
          <path d="M1 1h22l8 8v32H1z" fill="#f6f7f8" stroke="#a0a0a0" strokeWidth="1.500" />
          <path d="M23 1v8h8" fill="#ddd" stroke="#a0a0a0" strokeWidth="1.500" />
        </svg>
      </TaskCell>
      <TaskCell line="w-20 bg-[linear-gradient(90deg,#0078d7_0%,#0078d7_80%,#66aee8_80%)]">
        <svg viewBox="0 0 48 32" className="mt-1 h-8 w-12">
          <path d="M1 3h12M35 3h12M5 4l9 24L24 6l10 22L43 4" fill="none" stroke="#f43014" strokeWidth="6.500" strokeLinejoin="round" />
          <path d="M24 8l6-7" stroke="#f88020" strokeWidth="6" />
        </svg>
      </TaskCell>
      <TaskCell>
        <svg viewBox="0 0 44 44" className="mt-1 h-11 w-11">
          <circle cx="22" cy="22" r="19" fill="#c8c0b8" stroke="#1c1c1c" strokeWidth="6" />
          <circle cx="22" cy="22" r="11" fill="#e8e4dc" />
          <circle cx="22" cy="22" r="4" fill="#888" />
          <path d="M0 6l4 3Q12-2 24 2l-2 6q-7-1-10 4l3 6H0z" fill="#dc2828" />
          <path d="M44 38l-4-3q-8 11-20 7l2-6q7 1 10-4l-3-6h15z" fill="#2c6cdc" />
        </svg>
      </TaskCell>
      <TaskCell>
        <svg viewBox="0 0 42 42" className="mt-1 h-[42px] w-[42px]">
          <rect width="42" height="42" fill="#a80c24" />
          <circle cx="28" cy="18" r="11" fill="none" stroke="#fff" strokeWidth="4" />
          <path d="M22 27l-5 12" stroke="#fff" strokeWidth="5" />
          <path d="M3 4l4 4 5-5 1 7 5-1M3 20l5-4 4 5M4 28l5 3 4-5M6 38l4-4 5 2" stroke="#fff" strokeWidth="3" fill="none" />
          <circle cx="9" cy="12" r="4" fill="#fff" />
          <circle cx="10" cy="33" r="4" fill="#fff" />
        </svg>
      </TaskCell>
      <TaskCell>
        <svg viewBox="0 0 48 48" className="mt-1 h-12 w-12">
          <rect width="48" height="48" rx="5" fill="#fff" />
          <path d="M24 3l17 9v22l-11 6v5l-8-5L7 34V12z" fill="#0f2b46" />
          <path d="M19 16l12 7-12 9" stroke="#fff" strokeWidth="1.800" fill="none" />
          <circle cx="19" cy="16" r="3" fill="#fff" />
          <circle cx="31" cy="23" r="3" fill="#fff" />
          <circle cx="20" cy="31" r="3" fill="#fff" />
        </svg>
      </TaskCell>
    </div>
    <div className="ml-auto flex items-center">
      <svg viewBox="0 0 30 60" className="h-[60px] w-[30px]">
        <path d="M25 1L1 36h11L6 58 29 22H18z" fill="#fff" stroke="#8a857e" strokeWidth="1.800" />
      </svg>
      <div className="ml-px flex h-12 w-[85px] items-center rounded-md border-2 border-[#8a857e] bg-white p-1">
        <div className="flex h-[38px] w-[74px] items-center justify-center border-2 border-[#8a857e] bg-[#189848] font-['Noto_Sans'] text-[24px] leading-none text-white">98%</div>
      </div>
      <div className="h-6 w-[7px] rounded-r-md border-y-2 border-r-2 border-[#8a857e] bg-white" />
      <svg viewBox="0 0 26 16" className="ml-[10px] h-4 w-[26px]">
        <path d="M1 15L13 2l12 13" fill="none" stroke="#111" strokeWidth="2.400" />
      </svg>
      <I className="ml-[19px]">
        <path d="M7 24a7 7 0 0 1-2-13a9 9 0 0 1 17-3q6 2 6 8" fill="#999" stroke="#222" strokeWidth="2" />
        <circle cx="22" cy="22" r="9" fill="#fff" />
        <path d="M17 21a5 5 0 0 1 9-2M27 16v4h-4M27 23a5 5 0 0 1-9 2M17 28v-4h4" stroke="#1a70c8" strokeWidth="1.800" />
      </I>
      <I className="ml-4">
        <path d="M1 8h8v4q0 4-4 4t-4-4zM3 8V3M7 8V3M5 16v8h5" stroke="#111" strokeWidth="2" />
        <rect x="11" y="11" width="18" height="13" fill="#111" />
        <rect x="9" y="9" width="21" height="17" stroke="#111" strokeWidth="1.600" />
        <path d="M31 14v7" stroke="#111" strokeWidth="2" />
      </I>
      <I className="ml-4">
        <path d="M1 11h5l7-7v24l-7-7H1z" stroke="#111" strokeWidth="2" />
        <path d="M18 11l10 11M28 11L18 22" stroke="#111" strokeWidth="2" />
      </I>
      <div className="ml-4 w-8 text-[30px] font-bold leading-none text-white [-webkit-text-stroke:1.400px_#6a6a6a]">英</div>
      <Sogou className="ml-[25px] h-[31px] w-8" />
      <div className="ml-[19px] flex w-[148px] flex-col items-center font-['Noto_Sans'] text-2xl leading-[38px] text-black">
        <div>12:44</div>
        <div>2024/7/23</div>
      </div>
      <div className="relative ml-[22px] h-[54px] w-[54px]">
        <svg viewBox="0 0 34 34" className="absolute left-0 top-[10px] h-[34px] w-[34px]">
          <path d="M0 0h33v26H20l-7 7v-7H0z" fill="#000" />
          <path d="M6 7h21M6 13h21M6 19h14" stroke="#eee" strokeWidth="2" />
        </svg>
        <div className="absolute left-[9px] top-[16px] flex h-11 w-11 items-center justify-center rounded-full border-2 border-[#777] bg-[#c8c6c2]/85 text-[24px] font-bold leading-none text-black">
          23
        </div>
      </div>
      <div className="ml-[20px] h-20 w-0.5 bg-[#b8b0a4]" />
      <div className="w-[6px]" />
    </div>
  </div>
);

const B = "#1f76c9";
const InputBar = () => (
  <>
    <div className="absolute left-[2350px] top-[1668px] flex h-[52px] w-[529px] items-center rounded-sm border-2 border-[#b4c8e4] bg-white pl-[56px] text-[29px] font-bold leading-none text-[#1f76c9]">
      <div className="flex w-12 shrink-0">英</div>
      <I className="-ml-px mr-[17px]">
        <circle cx="7" cy="8" r="3.500" fill={B} />
        <circle cx="22" cy="19" r="4" fill={B} />
        <path d="M25 19q1 6-5 9" stroke={B} strokeWidth="3" />
      </I>
      <div className="flex gap-4">
        <I>
          <circle cx="16" cy="16" r="15" fill={B} />
          <circle cx="11" cy="12" r="3" fill="#fff" />
          <circle cx="21" cy="12" r="3" fill="#fff" />
          <path d="M8 18h16q-1 9-8 9t-8-9z" fill="#fff" />
        </I>
        <I>
          <rect x="10" y="0" width="12" height="20" rx="6" fill={B} />
          <path d="M5 13q0 11 11 11t11-11M16 24v4M11 30h10" stroke={B} strokeWidth="3" />
        </I>
        <I>
          <rect x="1" y="4" width="30" height="25" rx="3" fill={B} />
          <path d="M6 10h20M6 16h20" stroke="#fff" strokeWidth="4" strokeDasharray="4 1.500" />
          <path d="M6 23h4M12 23h10M24 23h3" stroke="#fff" strokeWidth="3.500" />
        </I>
        <I>
          <circle cx="13" cy="8" r="8" fill={B} />
          <path d="M1 31q0-14 12-14h8v14z" fill={B} />
          <rect x="12" y="17" width="20" height="14" fill="#fff" stroke={B} strokeWidth="2" />
          <path d="M15 21h5v6h-5M15 24h5M23 21h5v6h-5M23 24h5" stroke={B} strokeWidth="1.800" />
        </I>
        <I>
          <path d="M10 3q6 5 12 0l9 5-3 9-4-1v14H8V16l-4 1-3-9z" fill={B} />
        </I>
      </div>
      <div className="ml-[16px] w-[30px] font-medium">简</div>
      <div className="ml-4 flex gap-4">
        <I>
          <rect x="1" y="3" width="30" height="18" rx="8" fill={B} />
          <path d="M7 12h8M11 8v8" stroke="#fff" strokeWidth="2.600" />
          <circle cx="22" cy="12" r="3" fill="#fff" />
          <path d="M2 22l7 3-4 5H1zM30 22l-7 3 4 5h4z" fill={B} />
        </I>
        <I>
          <rect x="3" y="3" width="12" height="12" rx="4" fill={B} />
          <rect x="18.500" y="4.500" width="9" height="9" rx="4" stroke={B} strokeWidth="3.500" />
          <rect x="3" y="18" width="12" height="12" rx="4" fill={B} />
          <rect x="17" y="18" width="12" height="12" rx="4" fill={B} />
        </I>
      </div>
    </div>
    <Sogou className="absolute left-[2332px] top-[1660px] h-[60px] w-16" />
  </>
);

const Floating = () => (
  <>
    <div className="absolute left-[2862px] top-[1049px] h-[102px] w-[18px] rounded-full border-4 border-[#56606c] bg-[#a9bacd] px-0.5 pb-[1px] pt-[27px]">
      <div className="h-full w-full rounded-full bg-gradient-to-b from-[#fcc484] to-[#ff8438]" />
    </div>
    <div className="absolute left-[2765px] top-[1207px] flex h-[102px] w-[102px] items-center justify-center rounded-full bg-gradient-to-b from-[#c6d6f8] to-[#bccbf8] shadow-[0_2px_12px_rgba(80,100,160,0.2)]">
      <div className="flex h-[86px] w-[86px] items-center justify-center rounded-full bg-[radial-gradient(circle,#eaeef8_20%,#d6dff8_100%)]">
        <svg viewBox="0 0 36 58" className="h-[58px] w-9">
          <defs>
            <linearGradient id="usb" x1="0" y1="0" x2="0.400" y2="1">
              <stop offset="0" stopColor="#82a4ff" />
              <stop offset="1" stopColor="#3c68f8" />
            </linearGradient>
          </defs>
          <rect x="6" y="0" width="24" height="14" fill="#c4c8d0" />
          <rect x="27" y="0" width="3" height="14" fill="#8c909c" />
          <path d="M11 5h3v3h-3zM19 5h4v3h-4z" fill="#555" />
          <path d="M0 14q0-2 2-2h32q2 0 2 2v24a18 19 0 0 1-36 0z" fill="url(#usb)" />
          <path d="M34 12q2 0 2 2v24q0 10-8 16 5-7 5-16z" fill="#2c54cc" />
        </svg>
      </div>
    </div>
  </>
);

export default function App() {
  return (
    <div className="relative h-[1800px] w-[2880px] overflow-hidden bg-gradient-to-b from-[#9bb4d2] to-[#8fabc9] font-['Noto_Sans_CJK_SC',sans-serif] [text-spacing-trim:space-all]">
      <BackWindow />
      <LeftWindow />
      <MainWindow />
      <Cards />
      <Taskbar />
      <InputBar />
      <Floating />
    </div>
  );
}
